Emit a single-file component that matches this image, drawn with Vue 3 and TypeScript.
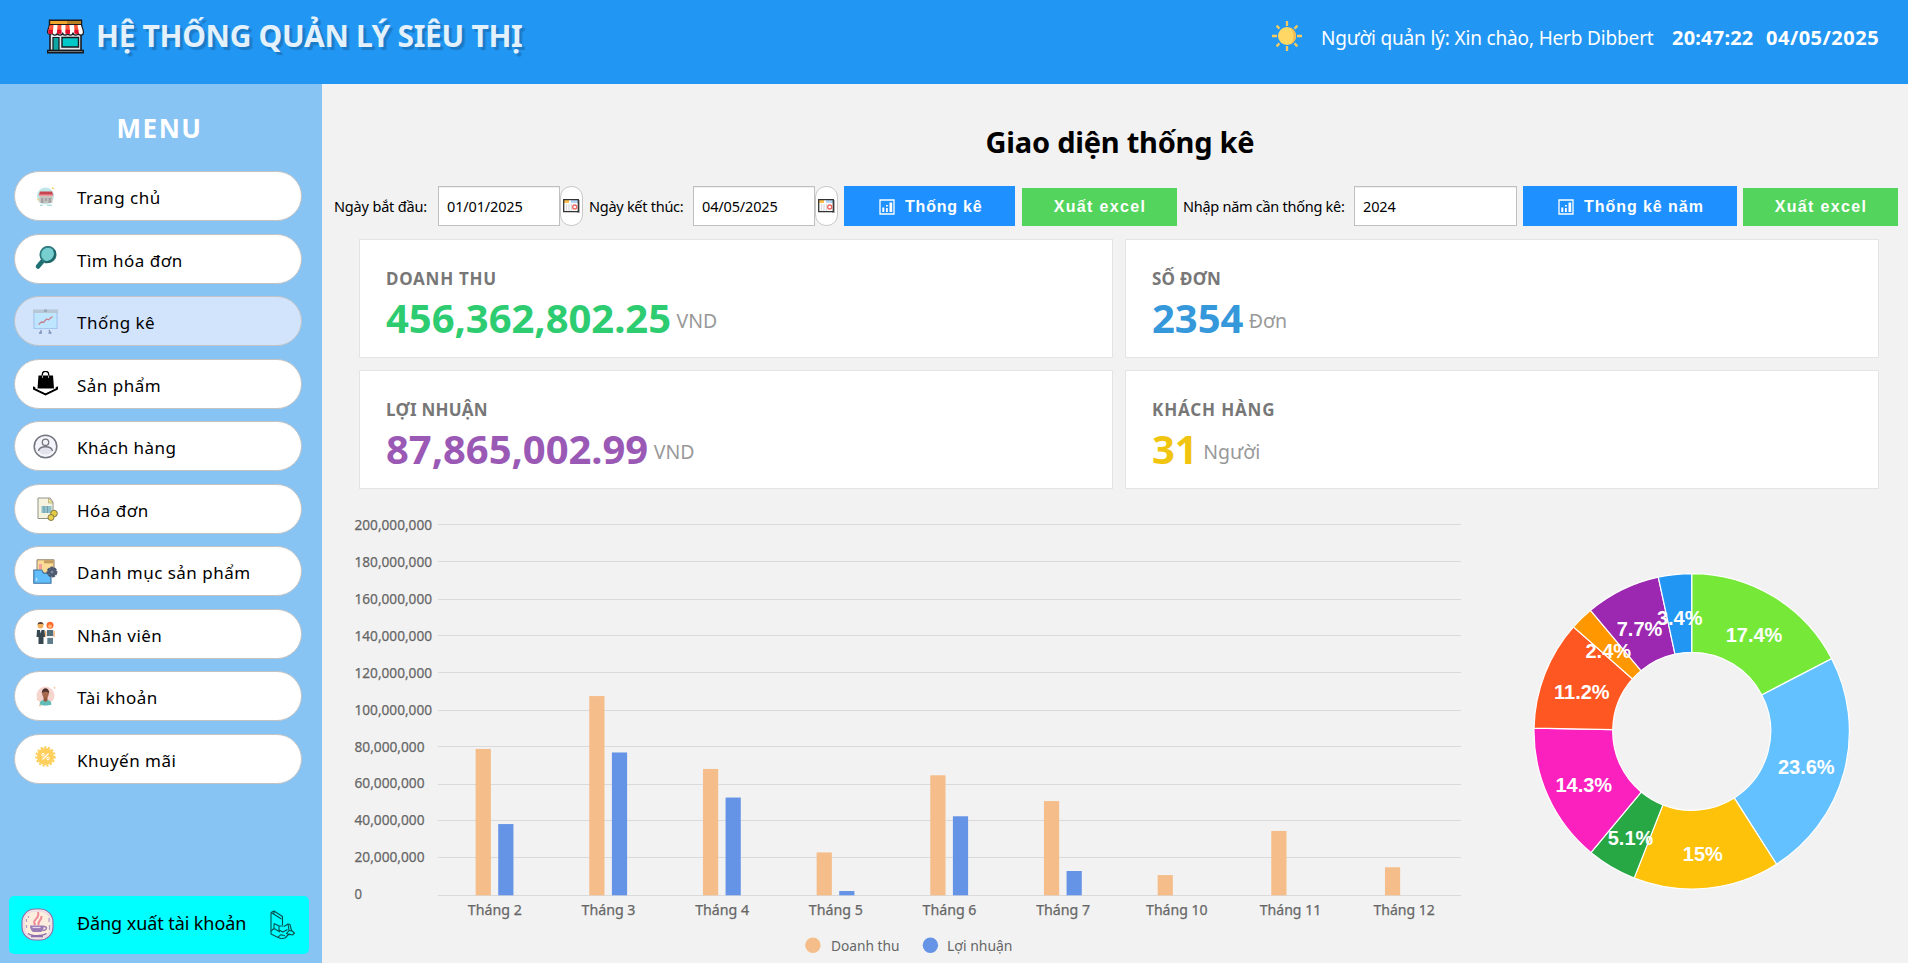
<script setup lang="ts">
import { ref } from 'vue'

interface MenuItem { id: string; label: string }
const menu: MenuItem[] = [
  { id: 'home', label: 'Trang chủ' },
  { id: 'search', label: 'Tìm hóa đơn' },
  { id: 'stats', label: 'Thống kê' },
  { id: 'product', label: 'Sản phẩm' },
  { id: 'customer', label: 'Khách hàng' },
  { id: 'invoice', label: 'Hóa đơn' },
  { id: 'category', label: 'Danh mục sản phẩm' },
  { id: 'staff', label: 'Nhân viên' },
  { id: 'account', label: 'Tài khoản' },
  { id: 'promo', label: 'Khuyến mãi' },
]
const active = ref('stats')

const startDate = ref('01/01/2025')
const endDate = ref('04/05/2025')
const year = ref('2024')

const cards = [
  { key: 'revenue', label: 'DOANH THU', value: '456,362,802.25', unit: 'VND' },
  { key: 'orders', label: 'SỐ ĐƠN', value: '2354', unit: 'Đơn' },
  { key: 'profit', label: 'LỢI NHUẬN', value: '87,865,002.99', unit: 'VND' },
  { key: 'customers', label: 'KHÁCH HÀNG', value: '31', unit: 'Người' },
]

// Bar chart geometry, in the chart's own units
const BASE_Y = 895
const PLOT_LEFT = 438
const PLOT_RIGHT = 1461
const SLOT = (PLOT_RIGHT - PLOT_LEFT) / 9
const gridY = [524, 561, 599, 635, 672, 710, 746, 784, 820, 857, 895]
const ticks = gridY.map((y, i) => {
  const v = (10 - i) * 20000000
  return { y, textY: 529.8 + i * 36.95, text: v.toLocaleString('en-US'), len: v >= 100000000 ? 77.5 : v ? 70 : 7.5 }
})
// Monthly revenue and profit in millions
const months = [
  { name: 'Tháng 2', revenue: 78.9, profit: 38.4 },
  { name: 'Tháng 3', revenue: 107.4, profit: 77 },
  { name: 'Tháng 4', revenue: 68.1, profit: 52.7 },
  { name: 'Tháng 5', revenue: 23.1, profit: 2.3 },
  { name: 'Tháng 6', revenue: 64.7, profit: 42.6 },
  { name: 'Tháng 7', revenue: 50.8, profit: 13.1 },
  { name: 'Tháng 10', revenue: 10.9, profit: 0 },
  { name: 'Tháng 11', revenue: 34.7, profit: 0 },
  { name: 'Tháng 12', revenue: 15.1, profit: 0 },
].map((m, i) => ({
  ...m,
  cx: PLOT_LEFT + SLOT * (i + 0.5),
  rh: m.revenue * 1.855,
  ph: m.profit * 1.855,
  len: m.name.length > 7 ? 61.5 : 54,
}))

// Donut chart
const CX = 1691.7
const CY = 731.3
const R = 157.7
const r = 79
const shares = [
  { pct: 17.4, color: '#75e838', x: 1754, y: 641.7 },
  { pct: 23.6, color: '#64c1ff', x: 1806.3, y: 774 },
  { pct: 15, color: '#ffc20b', x: 1702.8, y: 861 },
  { pct: 5.1, color: '#28a745', x: 1630.5, y: 845 },
  { pct: 14.3, color: '#fb21bf', x: 1583.8, y: 792 },
  { pct: 11.2, color: '#ff5722', x: 1581.8, y: 699 },
  { pct: 2.4, color: '#ff9800', x: 1608.3, y: 658.3 },
  { pct: 7.7, color: '#9c27b0', x: 1639.5, y: 636.3 },
  { pct: 3.4, color: '#2196f3', x: 1679.7, y: 625.3 },
]
const total = shares.reduce((s, p) => s + p.pct, 0)
let acc = 0
const slices = shares.map((s) => {
  const a0 = (acc / total) * Math.PI * 2
  acc += s.pct
  const a1 = (acc / total) * Math.PI * 2
  const pt = (a: number, rad: number) => `${(CX + Math.sin(a) * rad).toFixed(2)} ${(CY - Math.cos(a) * rad).toFixed(2)}`
  return {
    ...s,
    d: `M${pt(a0, R)} A${R} ${R} 0 0 1 ${pt(a1, R)} L${pt(a1, r)} A${r} ${r} 0 0 0 ${pt(a0, r)} Z`,
  }
})
</script>

<template>
  <div class="app">
    <header class="header">
      <svg class="shop" viewBox="0 0 37 34">
        <path d="M3 14h31v17H3z" fill="#e4e9ee" stroke="#17191f" stroke-width="1.6" />
        <path d="M2.5.8h32V6h-32z" fill="#f0a52c" stroke="#17191f" stroke-width="1.4" />
        <path d="M20 1.5h14v3.8H20z" fill="#b98024" />
        <path d="M2.6 5h31.8l2 6.500v1.500a2.600 2.600 0 0 1-5.200 0 2.600 2.600 0 0 1-5.200 0 2.600 2.600 0 0 1-5.200 0 2.600 2.600 0 0 1-5.200 0 2.600 2.600 0 0 1-5.200 0 2.600 2.600 0 0 1-5.200 0 2.400 2.400 0 0 1-4.600 0V11.500z" fill="#fff" stroke="#17191f" stroke-width="1.200" />
        <path d="M3 5.500h3.600l-.9 8.500H1.500v-3zM10.500 5.500h4l-.4 8.500h-4zM18.500 5.500h4l.4 8.500h-4.400zM27 5.500h3.600l1.200 8.500h-4z" fill="#ff5236" />
        <path d="M1.200 10.200h4.800l-.4 4H1.500zM10 10.200h4.500v4h-4.400zM18.500 10.200h4.500v4h-4.500zM27.400 10.200h4v4h-4z" fill="#e00d2d" />
        <path d="M6 18h6v13H6z" fill="#0fa7a3" stroke="#17191f" stroke-width="1.200" />
        <path d="M15 18h16.500v9.500H15z" fill="#00c8c8" stroke="#17191f" stroke-width="1.400" />
        <path d="M.7 31h35.600v2.300H.7z" fill="#8d939b" stroke="#17191f" stroke-width="1.400" />
      </svg>
      <h1 class="brand">HỆ THỐNG QUẢN LÝ SIÊU THỊ</h1>
      <div class="header-right">
        <svg class="sun" viewBox="0 0 30 30">
          <circle cx="15" cy="15" r="9" fill="#ffd764" />
          <path d="M18 6.500a9 9 0 0 1 0 17a12 12 0 0 0 0-17z" fill="#f2bd55" />
          <path d="M15 0v5M15 25v5M0 15h5M25 15H30M4.600 4.600l2.800 3M25.400 4.600l-2.800 3M4.600 25.400l2.800-3M25.400 25.400l-2.800-3" stroke="#f7ca5e" stroke-width="2.300" fill="none" />
        </svg>
        <span class="user">Người quản lý: Xin chào, Herb Dibbert</span>
        <b class="time">20:47:22</b>
        <b class="date">04/05/2025</b>
      </div>
    </header>

    <div class="body">
      <aside class="sidebar">
        <h2 class="menu-title">MENU</h2>
        <nav class="menu">
          <button v-for="m in menu" :key="m.id" class="item" :class="{ active: active === m.id }" @click="active = m.id">
            <svg class="icon" viewBox="0 0 25 25">
              <g v-if="m.id === 'home'">
                <circle cx="12.500" cy="12" r="8.500" fill="#bfe6e6" />
                <path d="M6.500 12h13v7h-13z" fill="#c9c3bd" />
                <path d="M8 14h2.500v5H8zM12 14h2v3h-2zM15.500 14h2.500v5h-2.500z" fill="#a2a2a6" />
                <path d="M7 7.500h12l1.200 3.500H5.800z" fill="#c8454f" />
                <path d="M5.800 10.500h14.500v1.500H5.800z" fill="#ef9aa0" />
                <path d="M19 4l2 .6M4.500 15.500l1.500.5" stroke="#f2cf62" stroke-width="1.500" />
                <path d="M7 21.300h3M14 21.300h5" stroke="#b5e0e0" stroke-width="1.500" />
              </g>
              <g v-else-if="m.id === 'search'">
                <path d="M5 20.500l5-6" stroke="#1f6f73" stroke-width="4.500" stroke-linecap="round" />
                <circle cx="15" cy="8.500" r="7.700" fill="#77cfd0" stroke="#2f7c80" stroke-width="1.800" />
                <path d="M21 4a8.500 8.500 0 0 1-9.500 12" stroke="#1f6569" stroke-width="2" fill="none" />
              </g>
              <g v-else-if="m.id === 'stats'">
                <path d="M8.500 21l-1.500 3M16 21l1.500 3M6 24h3M15.500 24h3" stroke="#7d90b8" stroke-width="1.300" />
                <path d="M1 2h23v17.500H1z" fill="#bfe6ff" stroke="#a5c6ee" stroke-width="1.200" />
                <path d="M0 .5h25V4H0z" fill="#b9c6d6" />
                <path d="M11 .5h3V3h-3z" fill="#98a9bd" />
                <path d="M5.500 15.500l3-2.500 2 .5 3-3.500 2 .8 4-3.300" stroke="#c9808e" stroke-width="1.300" fill="none" />
              </g>
              <g v-else-if="m.id === 'product'">
                <path d="M5.500 4.500h14.500l1 13H4.500z" fill="#000" />
                <path d="M9.300 8V3.500a3.200 3.200 0 0 1 6.400 0V8" stroke="#000" stroke-width="1.300" fill="none" />
                <path d="M9.500 4.500V7M15.500 4.500V7" stroke="#aaa" stroke-width="1" />
                <path d="M0 17.300l12.500 6.200 12.500-6.200M0 16l2 1.500M25 16l-2 1.500" stroke="#000" stroke-width="2" fill="none" />
                <path d="M5 18l7.500 3.500 7.500-3.500" stroke="#fff" stroke-width="1" fill="none" />
              </g>
              <g v-else-if="m.id === 'customer'">
                <circle cx="12.500" cy="12.500" r="11.300" fill="#f4f4fa" stroke="#74767f" stroke-width="1.500" />
                <path d="M6 17.500c0-4 3-4.800 6.500-4.800s6.500.8 6.500 4.800c-3 4-10 4-13 0z" fill="#e3e3ee" />
                <circle cx="12.500" cy="8.300" r="3.200" fill="#f4f4fa" stroke="#74767f" stroke-width="1.300" />
                <path d="M5.500 17c.5-3.300 3-4.300 7-4.300s6.500 1 7 4.300" stroke="#74767f" stroke-width="1.400" fill="none" />
              </g>
              <g v-else-if="m.id === 'invoice'">
                <path d="M5 2h12l3 4v16.500H5z" fill="#f6f3df" stroke="#8f9389" stroke-width="1" />
                <path d="M15.500 2v5H20z" fill="#f5e587" stroke="#a9a382" stroke-width=".7" />
                <path d="M8.500 10h10v7h-10z" fill="#8fc0cc" />
                <path d="M11 10v7M14.500 10v7" stroke="#6d97a5" stroke-width=".9" />
                <circle cx="21" cy="17.500" r="3.300" fill="#e4cb44" stroke="#83794a" stroke-width="1" />
                <circle cx="18" cy="21.500" r="3" fill="#e9d24a" stroke="#83794a" stroke-width="1" />
              </g>
              <g v-else-if="m.id === 'category'">
                <path d="M4 .8h17V14H4z" fill="#fbdc96" stroke="#8d7f6a" stroke-width="1" />
                <path d="M11 1.300h9.500v3h-9.500z" fill="#c59b5f" />
                <path d="M6 5h3v5H6z" fill="#f79c9c" />
                <path d="M.8 11h8l1.700 3.300H18v10H.8z" fill="#62bdfb" stroke="#3f6f9e" stroke-width="1.100" />
                <path d="M3.500 19v3" stroke="#bfe3ff" stroke-width="1.500" />
                <circle cx="19" cy="13" r="4.500" fill="#55627c" stroke="#4b566c" stroke-width="1.800" stroke-dasharray="3 .8" />
                <circle cx="19" cy="13" r="2.200" fill="#7b88a3" stroke="#3d4658" stroke-width=".9" />
              </g>
              <g v-else-if="m.id === 'staff'">
                <circle cx="7.500" cy="4.500" r="2.900" fill="#f2ae5b" />
                <path d="M4.500 4a3 3 0 0 1 6 0l-1-1h-4z" fill="#5d4037" />
                <path d="M4 9h7.500l.7 7H10.500v7H5.500v-7H3.500z" fill="#37474f" />
                <path d="M6.800 8.500h1.800l-.9 4z" fill="#fff" />
                <circle cx="17" cy="4.300" r="3.500" fill="#ff6d2e" />
                <circle cx="17" cy="5.300" r="1.800" fill="#ffb877" />
                <path d="M14 9h6.200l.3 6h-6.800z" fill="#546e7a" />
                <path d="M14 15h6.500v2H14z" fill="#eceff1" />
                <path d="M14.300 17h5.700v6h-5.700z" fill="#607d8b" />
                <path d="M12.500 10v6M21.200 10v6" stroke="#ffb877" stroke-width="1.200" />
              </g>
              <g v-else-if="m.id === 'account'">
                <circle cx="12.500" cy="11.500" r="9" fill="#f6d5cf" />
                <path d="M6.500 20.500c.5-4 2.500-4.500 6-4.500s5.500.5 6 4.500c-3 1.300-9 1.300-12 0z" fill="#62bdb9" />
                <path d="M10.500 12h4v4.500l-2 1.500-2-1.500z" fill="#96593f" />
                <ellipse cx="12.500" cy="9.500" rx="3.300" ry="4" fill="#a4684a" />
                <path d="M8.700 9.500c0-7 7.600-7 7.600 0-.8-2.500-6.800-2.500-7.600 0z" fill="#4f322b" />
                <path d="M21 3l1 1.500M4 15l1.500 1M6 21.500h2" stroke="#f3c99a" stroke-width="1.400" />
              </g>
              <g v-else>
                <circle cx="12.500" cy="10.500" r="8.500" fill="#ffcf5c" />
                <circle cx="12.500" cy="10.500" r="9.200" fill="none" stroke="#ffcf5c" stroke-width="2" stroke-dasharray="2.200 1.600" />
                <path d="M9.500 13.500l6-6" stroke="#fff" stroke-width="1.200" />
                <circle cx="10" cy="8.700" r="1.300" fill="none" stroke="#fff" />
                <circle cx="15" cy="12.500" r="1.300" fill="none" stroke="#fff" />
              </g>
            </svg>
            <span class="item-label">{{ m.label }}</span>
          </button>
        </nav>
        <button class="logout">
          <svg class="java" viewBox="0 0 33 33">
            <rect x="1" y="1" width="31" height="31" rx="13" fill="#fbeedd" stroke="#8e6fae" stroke-width="1.200" />
            <rect x="3" y="3" width="27" height="27" rx="11" fill="none" stroke="#eadbe6" stroke-width="1.600" />
            <path d="M14.500 17c-5-5 5-6 2.500-13M18 17c-2.500-3 3-4.500 2.500-9" stroke="#f08a98" stroke-width="2" fill="none" />
            <path d="M9 17.500h14c0 3-1 5-3 6.500h-8C10 22.500 9 20.500 9 17.500z" fill="#9b7bb5" />
            <path d="M11.500 19.500h8" stroke="#e6d8ec" stroke-width="1.200" />
            <path d="M23 18.500c4 0 3 4-1.500 4" stroke="#9b7bb5" stroke-width="1.400" fill="none" />
            <path d="M7 25.500c4 3 14 3 18.500 0M10 28.500h12" stroke="#8f6fab" stroke-width="1.500" fill="none" />
            <path d="M5.500 11v3M5.500 17v3M28 10v4M28.500 17v5M7.500 8v2" stroke="#b49ac6" stroke-width="1.200" />
          </svg>
          <span class="logout-label">Đăng xuất tài khoản</span>
          <svg class="exit" viewBox="0 0 25 29">
            <g fill="none" stroke="#07504f" stroke-width="1.100" stroke-linejoin="round">
              <path d="M1 2.500L4 1l8.500 5.500V15M1 2.500V24l7 3.500M1 2.500l2.500 1.500 8 5M4 1v2.500" />
              <path d="M4 13.500l5 2.500h4.500M4 13.500v5l6 3.500M4 18.500l-3 2.500M9 16v4l4 2 4.500-2.500" />
              <path d="M14 16.500l4-2.500 2 .5 1.500 6 3 2.500-2 2-3.500-1-4 4-4 .7-3-1.500 3-2.500 4 1M18 14l1 6.500-2.500 3 4 1.500M19 20.500l2.500.5" />
            </g>
          </svg>
        </button>
      </aside>

      <main class="main">
        <h2 class="page-title">Giao diện thống kê</h2>

        <div class="filters">
          <label class="lbl first">Ngày bắt đầu:</label>
          <input v-model="startDate" class="field date-field" />
          <button class="cal"><svg viewBox="0 0 17 14"><path d="M15 1h2v13h-3z" fill="#b3b3b3" /><path d="M.7.700h14.600v12H.7z" fill="#fff" /><path d="M1 1h5v3H1z" fill="#fdc04c" /><path d="M8 1h7v3H8z" fill="#b7d6f6" /><path d="M3.500 5v7M6 5v7M8.500 5v7" stroke="#dcdcdc" stroke-width="1.300" /><path d="M.7.700h14.600v12H.7z" fill="none" stroke="#333" stroke-width="1.300" /><circle cx="11.700" cy="8" r="2" fill="#fff" stroke="#f0635f" stroke-width="1.300" /></svg></button>
          <label class="lbl second">Ngày kết thúc:</label>
          <input v-model="endDate" class="field date-field" />
          <button class="cal"><svg viewBox="0 0 17 14"><path d="M15 1h2v13h-3z" fill="#b3b3b3" /><path d="M.7.700h14.600v12H.7z" fill="#fff" /><path d="M1 1h5v3H1z" fill="#fdc04c" /><path d="M8 1h7v3H8z" fill="#b7d6f6" /><path d="M3.500 5v7M6 5v7M8.500 5v7" stroke="#dcdcdc" stroke-width="1.300" /><path d="M.7.700h14.600v12H.7z" fill="none" stroke="#333" stroke-width="1.300" /><circle cx="11.700" cy="8" r="2" fill="#fff" stroke="#f0635f" stroke-width="1.300" /></svg></button>
          <button class="blue">
            <svg viewBox="0 0 16 16"><path d="M1 1h14v14H1z" fill="none" stroke="#fff" stroke-width="1.300" /><path d="M3.300 8.500h2V13h-2zM7 6h1.800v1.500H7zM7 9h1.800v4H7zM10.500 3.500h2.700V13h-2.700z" fill="#fff" /></svg>
            <span>Thống kê</span>
          </button>
          <button class="green">Xuất excel</button>
          <label class="lbl third">Nhập năm cần thống kê:</label>
          <input v-model="year" class="field year-field" />
          <button class="blue wide">
            <svg viewBox="0 0 16 16"><path d="M1 1h14v14H1z" fill="none" stroke="#fff" stroke-width="1.300" /><path d="M3.300 8.500h2V13h-2zM7 6h1.800v1.500H7zM7 9h1.800v4H7zM10.500 3.500h2.700V13h-2.700z" fill="#fff" /></svg>
            <span>Thống kê năm</span>
          </button>
          <button class="green last">Xuất excel</button>
        </div>

        <section class="cards">
          <div v-for="c in cards" :key="c.key" class="card" :class="c.key">
            <div class="card-label">{{ c.label }}</div>
            <div class="card-row">
              <span class="value">{{ c.value }}</span>
              <span class="unit">{{ c.unit }}</span>
            </div>
          </div>
        </section>

        <section class="charts">
          <svg class="bars" viewBox="340 489 1160 474">
            <rect v-for="g in ticks" :key="g.text" :x="PLOT_LEFT" :y="g.y" :width="PLOT_RIGHT - PLOT_LEFT" height="1" fill="#dadada" />
            <text v-for="g in ticks" :key="'t' + g.text" x="354.500" :y="g.textY" class="tick" :textLength="g.len" lengthAdjust="spacingAndGlyphs">{{ g.text }}</text>
            <g v-for="m in months" :key="m.name">
              <rect :x="m.cx - 19.200" :y="BASE_Y + 0.300 - m.rh" width="15.200" :height="m.rh" fill="#f5bd89" />
              <rect v-if="m.ph" :x="m.cx + 3.400" :y="BASE_Y + 0.300 - m.ph" width="15.200" :height="m.ph" fill="#6593e5" />
              <text :x="m.cx" y="914.800" text-anchor="middle" class="tick" :textLength="m.len" lengthAdjust="spacingAndGlyphs">{{ m.name }}</text>
            </g>
            <circle cx="812.900" cy="945.300" r="7.700" fill="#f5bd89" />
            <text x="831" y="950.600" class="legend" textLength="68.500" lengthAdjust="spacingAndGlyphs">Doanh thu</text>
            <circle cx="930.400" cy="945.300" r="7.700" fill="#6593e5" />
            <text x="947" y="950.600" class="legend" textLength="65.500" lengthAdjust="spacingAndGlyphs">Lợi nhuận</text>
          </svg>
          <svg class="donut" viewBox="1500 489 408 474">
            <path v-for="s in slices" :key="s.pct" :d="s.d" :fill="s.color" stroke="#fff" stroke-width="1.200" />
            <text v-for="s in slices" :key="'p' + s.pct" :x="s.x" :y="s.y" text-anchor="middle" class="pct">{{ s.pct }}%</text>
          </svg>
        </section>
      </main>
    </div>
  </div>
</template>

<style>
body { margin: 0; overflow: hidden; }
</style>

<style scoped>
.app {
  width: 1908px;
  height: 963px;
  display: flex;
  flex-direction: column;
  overflow: hidden;
  background: #f2f2f2;
  color: #000;
  font-family: "Noto Sans", "Open Sans", sans-serif;
}
* { box-sizing: border-box; }
h1, h2 { margin: 0; }
button, input { font-family: inherit; margin: 0; color: inherit; }
svg { display: block; flex: none; }

.header { height: 84px; flex: none; display: flex; align-items: flex-start; background: #2196f3; color: #fff; }
.shop { width: 37px; height: 35px; margin: 18.500px 0 0 47px; }
.brand {
  margin-left: 12px;
  font-size: 30px;
  line-height: 72px;
  letter-spacing: -0.320px;
  color: #e3f1fd;
  text-shadow: 3px 3px 1px rgba(0, 0, 0, 0.18);
  white-space: nowrap;
}
.header-right { margin-left: auto; display: flex; line-height: 76px; padding-right: 28px; white-space: nowrap; }
.sun { width: 30px; height: 30px; margin-top: 21px; }
.user { width: 333px; margin-left: 19px; font-size: 19px; letter-spacing: -0.160px; }
.time { width: 83px; margin-left: 18px; font-size: 20px; letter-spacing: 0.200px; }
.date { width: 114px; margin-left: 11px; font-size: 20px; letter-spacing: 0.500px; }

.body { flex: 1; display: flex; min-height: 0; }
.sidebar { width: 322px; flex: none; display: flex; flex-direction: column; background: #87c3f3; }
.menu-title { height: 87px; line-height: 88px; padding-right: 3px; text-align: center; color: #fff; font-size: 26px; letter-spacing: 1.500px; }
.menu { display: flex; flex-direction: column; gap: 12.500px; padding: 0 20px 0 14px; }
.item {
  height: 50px;
  display: flex;
  align-items: center;
  padding: 0 0 0 18px;
  border: 1px solid #c3c3c3;
  border-radius: 25px;
  background: #fff;
  text-align: left;
}
.item.active { background: #d2e3fc; }
.icon { width: 25px; height: 25px; }
.item-label { margin-left: 19px; padding-top: 3px; font-size: 17px; letter-spacing: 0.480px; }
.logout {
  margin: auto 13px 9.500px 9px;
  height: 58px;
  display: flex;
  align-items: center;
  padding: 0 14px 0 12px;
  border: 0;
  border-radius: 5px;
  background: #00ffff;
}
.java { width: 33px; height: 33px; }
.logout-label { margin: -3px 0 0 23px; font-size: 18px; letter-spacing: -0.080px; }
.exit { width: 25px; height: 29px; margin-left: auto; }

.main { flex: 1; display: flex; flex-direction: column; min-width: 0; }
.page-title { height: 102px; padding: 14px 0 0 10px; line-height: 88px; text-align: center; font-size: 29px; letter-spacing: -0.230px; }
.filters { height: 40px; display: flex; align-items: flex-end; padding-left: 12px; }
.lbl { line-height: 40px; font-size: 14.500px; letter-spacing: -0.170px; white-space: nowrap; }
.first { width: 104px; }
.second { width: 103.500px; margin-left: 6px; margin-right: 0.500px; letter-spacing: -0.270px; }
.third { width: 171px; margin-left: 6px; letter-spacing: -0.270px; }
.field {
  height: 40px;
  padding: 0 0 0 8px;
  border: 1px solid #c0c0c0;
  background: #fff;
  font-size: 14.500px;
  letter-spacing: -0.150px;
  outline: 0;
  box-shadow: inset 0 1px 0 #eee;
}
.date-field { width: 122px; }
.year-field { width: 163px; }
.cal { width: 23px; height: 40px; padding: 0 0 0 2px; border: 1px solid #c8c8c8; border-radius: 11px; background: #fff; }
.cal svg { width: 17px; height: 14px; }
.blue {
  width: 171px;
  height: 40px;
  margin-left: 6px;
  display: flex;
  align-items: center;
  padding: 2px 0 0 35px;
  border: 0;
  background: #1e90ff;
  color: #fff;
  font: bold 16px "Liberation Sans", Arial, sans-serif;
  letter-spacing: 0.800px;
  white-space: nowrap;
}
.blue svg { width: 16px; height: 16px; margin-right: 10px; }
.wide { width: 214px; letter-spacing: 0.950px; }
.green {
  width: 155px;
  height: 38px;
  margin-left: 7px;
  padding: 0 0 0 1px;
  border: 0;
  background: #53d45d;
  color: #fff;
  font: bold 16px "Liberation Sans", Arial, sans-serif;
  letter-spacing: 1.350px;
}
.last { margin-left: 6px; }

.cards {
  display: grid;
  grid-template-columns: 754px 754px;
  grid-auto-rows: 119px;
  gap: 12px;
  margin: 13px 0 0 37px;
}
.card { padding: 24.500px 0 0 26px; border: 1px solid #e4e4e4; background: #fff; }
.card-label { height: 28px; line-height: 28px; font-size: 17px; font-weight: bold; color: #777; letter-spacing: 0.750px; }
.card-row { display: flex; align-items: flex-start; }
.value { font-size: 40px; line-height: 50px; font-weight: bold; letter-spacing: -0.050px; }
.unit { margin-left: 5.500px; font-size: 19.500px; line-height: 55px; color: #999; }
.revenue .value { color: #2ecc71; }
.orders .value { color: #3498db; }
.profit .value { color: #9b59b6; }
.customers .value { color: #f1c40f; }
.orders .card-label { letter-spacing: 0.250px; }
.profit .card-label { letter-spacing: 0.250px; }
.customers .card-label { letter-spacing: 0.850px; }

.charts { display: flex; height: 474px; padding-left: 18px; }
.bars { width: 1160px; height: 474px; }
.donut { width: 408px; height: 474px; }
.tick { font-size: 15px; fill: #666; stroke: #666; stroke-width: 0.250px; }
.legend { font-size: 15px; fill: #666; }
.pct { font: bold 20px "Liberation Sans", Arial, sans-serif; fill: #fff; }
</style>
